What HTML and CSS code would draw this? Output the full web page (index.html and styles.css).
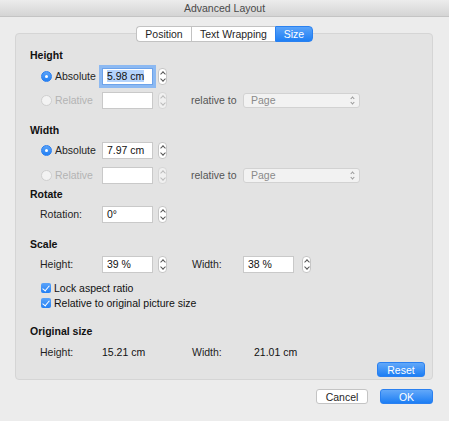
FILE: index.html
```html
<!DOCTYPE html>
<html lang="en">
<head>
    <meta charset="UTF-8">
    <title>Advanced Layout</title>
    <link rel="stylesheet" href="styles.css">
</head>
<body>
    <div class="window">
        <!-- Title bar -->
        <div class="titlebar">Advanced Layout</div>

        <!-- Tabs -->
        <div class="tabs">
            <span class="tab">Position</span>
            <span class="tab">Text Wrapping</span>
            <span class="tab active">Size</span>
        </div>

        <div class="panel">
            <!-- Height -->
            <div class="title">Height</div>
            <div class="row">
                <label class="opt"><span class="radio on"></span>Absolute</label>
                <span class="input focus"><span class="sel">5.98 cm</span></span>
                <span class="stepper"></span>
            </div>
            <div class="row gap-6">
                <label class="opt off"><span class="radio"></span>Relative</label>
                <span class="input"></span>
                <span class="stepper off"></span>
                <span class="rel-to">relative to</span>
                <span class="select">Page</span>
            </div>

            <!-- Width -->
            <div class="title gap-14">Width</div>
            <div class="row gap-4">
                <label class="opt"><span class="radio on"></span>Absolute</label>
                <span class="input">7.97 cm</span>
                <span class="stepper"></span>
            </div>
            <div class="row gap-7">
                <label class="opt off"><span class="radio"></span>Relative</label>
                <span class="input"></span>
                <span class="stepper off"></span>
                <span class="rel-to">relative to</span>
                <span class="select">Page</span>
            </div>

            <!-- Rotate -->
            <div class="title gap-3">Rotate</div>
            <div class="row gap-4">
                <span class="opt">Rotation:</span>
                <span class="input">0°</span>
                <span class="stepper"></span>
            </div>

            <!-- Scale -->
            <div class="title gap-14">Scale</div>
            <div class="row gap-4">
                <span class="opt">Height:</span>
                <span class="input">39 %</span>
                <span class="stepper"></span>
                <span class="opt second">Width:</span>
                <span class="input">38 %</span>
                <span class="stepper wide"></span>
            </div>
            <label class="check gap-8"><span class="box"></span>Lock aspect ratio</label>
            <label class="check gap-1"><span class="box"></span>Relative to original picture size</label>

            <!-- Original size -->
            <div class="title gap-14">Original size</div>
            <div class="row info gap-7">
                <span class="opt">Height:</span>
                <span class="value">15.21 cm</span>
                <span class="opt">Width:</span>
                <span class="value">21.01 cm</span>
            </div>

            <div class="reset-row">
                <button class="btn blue reset">Reset</button>
            </div>
        </div>

        <div class="footer">
            <button class="btn cancel">Cancel</button>
            <button class="btn blue ok">OK</button>
        </div>
    </div>
</body>
</html>
```

FILE: styles.css
```css
/* Reset */
* {
    margin: 0;
    padding: 0;
    box-sizing: border-box;
    font-family: "Liberation Sans", Arial, sans-serif;
}

body {
    background-color: #ececec;
}

.window {
    width: 449px;
    height: 421px;
    background-color: #ececec;
    font-size: 10.5px;
    color: #1f1f1f;
}

/* Title bar */
.titlebar {
    height: 17px;
    line-height: 16px;
    text-align: center;
    color: #4a4a4a;
    background: linear-gradient(#ececec, #d4d4d4);
    border-bottom: 1px solid #c4c4c4;
}

/* Tabs */
.tabs {
    display: flex;
    justify-content: center;
    margin-top: 9px;
    margin-bottom: -9px;
    position: relative;
    z-index: 2;
}

.tab {
    height: 16px;
    line-height: 14px;
    padding: 0 10px;
    background-color: #fff;
    border: 1px solid #c2c2c2;
    border-right: none;
    color: #1f1f1f;
}

.tab:first-child {
    border-radius: 4px 0 0 4px;
    width: 55px;
    text-align: center;
    padding: 0;
}

.tab:nth-child(2) {
    width: 84px;
    text-align: center;
    padding: 0;
}

.tab.active {
    width: 38px;
    padding: 0;
    text-align: center;
    border: 1px solid #2a81f0;
    border-radius: 0 4px 4px 0;
    color: #fff;
    background: linear-gradient(#5aa3f9, #1f7ff4);
}

/* Panel */
.panel {
    margin-left: 15px;
    width: 418px;
    height: 347px;
    background-color: #e3e3e3;
    border: 1px solid #d5d5d5;
    border-radius: 4px;
    padding: 14px 7px 0 14px;
}

.title {
    height: 14px;
    line-height: 14px;
    font-weight: bold;
    color: #111;
}

.row {
    display: flex;
    align-items: center;
    height: 18px;
    margin-top: 5px;
    padding-left: 10px;
}

.gap-1 { margin-top: 1px; }
.gap-3 { margin-top: 3px; }
.gap-4 { margin-top: 4px; }
.gap-6 { margin-top: 6px; }
.gap-7 { margin-top: 7px; }
.gap-8 { margin-top: 8px; }
.gap-14 { margin-top: 14px; }

.opt {
    display: flex;
    align-items: center;
    width: 62px;
    flex-shrink: 0;
}

.opt.off {
    color: #b3b3b3;
}

.opt.second {
    margin-left: 25px;
    width: 51px;
}

.radio {
    width: 11px;
    height: 11px;
    margin: 0 3px 0 1px;
    border-radius: 50%;
    border: 1px solid #cfcfcf;
    background-color: #f3f3f3;
    position: relative;
}

.radio.on {
    border-color: #2a7ff0;
    background: linear-gradient(#59a2f8, #2380f4);
}

.radio.on::after {
    content: "";
    position: absolute;
    left: 3px;
    top: 3px;
    width: 3px;
    height: 3px;
    border-radius: 50%;
    background-color: #fff;
}

.input {
    width: 51px;
    height: 17px;
    line-height: 15px;
    padding-left: 4px;
    background-color: #fff;
    border: 1px solid #c9c9c9;
    color: #111;
    flex-shrink: 0;
}

.input.focus {
    box-shadow: 0 0 0 3px #8cb9f2;
    border-color: #6da3ea;
}

.input .sel {
    background-color: #b4d3fb;
}

.stepper {
    width: 9px;
    height: 17px;
    margin-left: 5px;
    border: 1px solid #c6c6c6;
    border-radius: 4px;
    background-color: #fff;
    position: relative;
    flex-shrink: 0;
}

.stepper::before,
.stepper::after {
    content: "";
    position: absolute;
    left: 2px;
    width: 3px;
    height: 3px;
    border-left: 1px solid #555;
    border-top: 1px solid #555;
}

.stepper::before {
    top: 3px;
    transform: rotate(45deg);
}

.stepper::after {
    bottom: 3px;
    transform: rotate(-135deg);
}

.stepper.off {
    border-color: #d6d6d6;
    background-color: #f0f0f0;
}

.stepper.off::before,
.stepper.off::after {
    border-color: #bbb;
}

.stepper.wide {
    margin-left: 8px;
}

.rel-to {
    margin-left: 24px;
    width: 52px;
    color: #555;
}

.select {
    width: 117px;
    height: 15px;
    line-height: 13px;
    padding-left: 7px;
    background-color: #f2f2f2;
    border: 1px solid #d2d2d2;
    border-radius: 3px;
    color: #8a8a8a;
    position: relative;
}

.select::before,
.select::after {
    content: "";
    position: absolute;
    right: 5px;
    width: 2px;
    height: 2px;
    border-left: 1px solid #999;
    border-top: 1px solid #999;
}

.select::before {
    top: 3px;
    transform: rotate(45deg);
}

.select::after {
    top: 7px;
    transform: rotate(-135deg);
}

/* Checkboxes */
.check {
    display: flex;
    align-items: center;
    height: 14px;
    padding-left: 11px;
    color: #111;
}

.box {
    width: 10px;
    height: 10px;
    margin-right: 3px;
    border-radius: 2px;
    background: linear-gradient(#5aa3f9, #2380f4);
    position: relative;
}

.box::after {
    content: "";
    position: absolute;
    left: 3px;
    top: 1px;
    width: 3px;
    height: 6px;
    border-right: 1.5px solid #fff;
    border-bottom: 1.5px solid #fff;
    transform: rotate(40deg);
}

/* Original size */
.row.info {
    height: 14px;
}

.value {
    width: 90px;
    color: #111;
}

/* Buttons */
.reset-row {
    display: flex;
    justify-content: flex-end;
    margin-top: 3px;
}

.btn {
    height: 15px;
    font-size: 10.5px;
    border-radius: 3px;
    cursor: pointer;
}

.btn.blue {
    color: #fff;
    border: 1px solid #2a80f0;
    background: linear-gradient(#62a8f9, #1d7ef4);
}

.reset {
    width: 48px;
}

.footer {
    display: flex;
    justify-content: flex-end;
    gap: 12px;
    margin-top: 9px;
    padding-right: 16px;
}

.cancel {
    width: 52px;
    color: #1f1f1f;
    background-color: #fff;
    border: 1px solid #c4c4c4;
}

.ok {
    width: 53px;
}
```
